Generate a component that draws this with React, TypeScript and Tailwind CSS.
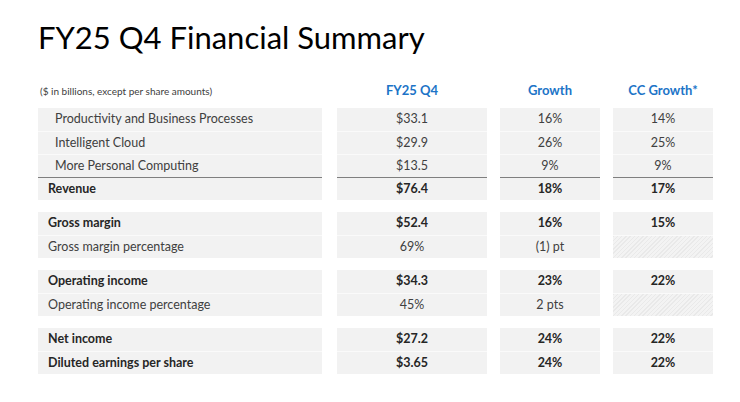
import React from "react";

type Row = { label: string; v: string; g: string; cc: string | null; bold?: boolean; indent?: boolean; dark?: boolean };

const groups: Row[][] = [
  [
    { label: "Productivity and Business Processes", v: "$33.1", g: "16%", cc: "14%", indent: true },
    { label: "Intelligent Cloud", v: "$29.9", g: "26%", cc: "25%", indent: true },
    { label: "More Personal Computing", v: "$13.5", g: "9%", cc: "9%", indent: true },
    { label: "Revenue", v: "$76.4", g: "18%", cc: "17%", bold: true, dark: true },
  ],
  [
    { label: "Gross margin", v: "$52.4", g: "16%", cc: "15%", bold: true },
    { label: "Gross margin percentage", v: "69%", g: "(1) pt", cc: null },
  ],
  [
    { label: "Operating income", v: "$34.3", g: "23%", cc: "22%", bold: true },
    { label: "Operating income percentage", v: "45%", g: "2 pts", cc: null },
  ],
  [
    { label: "Net income", v: "$27.2", g: "24%", cc: "22%", bold: true },
    { label: "Diluted earnings per share", v: "$3.65", g: "24%", cc: "22%", bold: true },
  ],
];

function Cell({ children, row, i, align, hatch }: { children?: React.ReactNode; row: Row; i: number; align: "left" | "center"; hatch?: boolean }) {
  const border = i === 0 ? "" : row.dark ? "border-t border-[#7f7f7f]" : "border-t border-[#fafafa]";
  const weight = row.bold ? "font-bold text-[#262626]" : "text-[#404040]";
  const pad = align === "left" ? (row.indent ? "pl-[17px]" : "pl-[10px]") : "justify-center";
  const bg = hatch
    ? "bg-[repeating-linear-gradient(135deg,#e9e9e9_0px,#e9e9e9_1px,#f3f3f3_1px,#f3f3f3_3px)]"
    : "bg-[#f2f2f2]";
  return (
    <div className={`h-[23px] flex items-center ${bg} ${border} ${weight} ${pad}`}>{children}</div>
  );
}

export default function App() {
  return (
    <div className="w-[740px] h-[402px] bg-white overflow-hidden font-['Lato','Noto_Sans',sans-serif]">
      <div className="pl-[38px] pt-[17px]">
        <h1 className="text-[31px] leading-[40px] text-black font-normal">FY25 Q4 Financial Summary</h1>
        <div className="mt-[24px] flex items-center h-[20px]">
          <div className="w-[284px] pl-[2px] text-[10px] text-[#404040]">($ in billions, except per share amounts)</div>
          <div className="ml-[15px] w-[150px] text-center text-[13px] font-bold text-[#1c74c7]">FY25 Q4</div>
          <div className="ml-[13px] w-[100px] text-center text-[13px] font-bold text-[#1c74c7]">Growth</div>
          <div className="ml-[13px] w-[100px] text-center text-[13px] font-bold text-[#1c74c7]">CC Growth*</div>
        </div>
        <div className="mt-[7px] flex flex-col gap-[12px] text-[12.5px]">
          {groups.map((g, gi) => (
            <div key={gi} className="flex">
              <div className="w-[284px] flex flex-col">
                {g.map((r, i) => (
                  <Cell key={i} row={r} i={i} align="left">{r.label}</Cell>
                ))}
              </div>
              <div className="ml-[15px] w-[150px] flex flex-col">
                {g.map((r, i) => (
                  <Cell key={i} row={r} i={i} align="center">{r.v}</Cell>
                ))}
              </div>
              <div className="ml-[13px] w-[100px] flex flex-col">
                {g.map((r, i) => (
                  <Cell key={i} row={r} i={i} align="center">{r.g}</Cell>
                ))}
              </div>
              <div className="ml-[13px] w-[100px] flex flex-col">
                {g.map((r, i) => (
                  <Cell key={i} row={r} i={i} align="center" hatch={r.cc === null}>{r.cc}</Cell>
                ))}
              </div>
            </div>
          ))}
        </div>
      </div>
    </div>
  );
}
